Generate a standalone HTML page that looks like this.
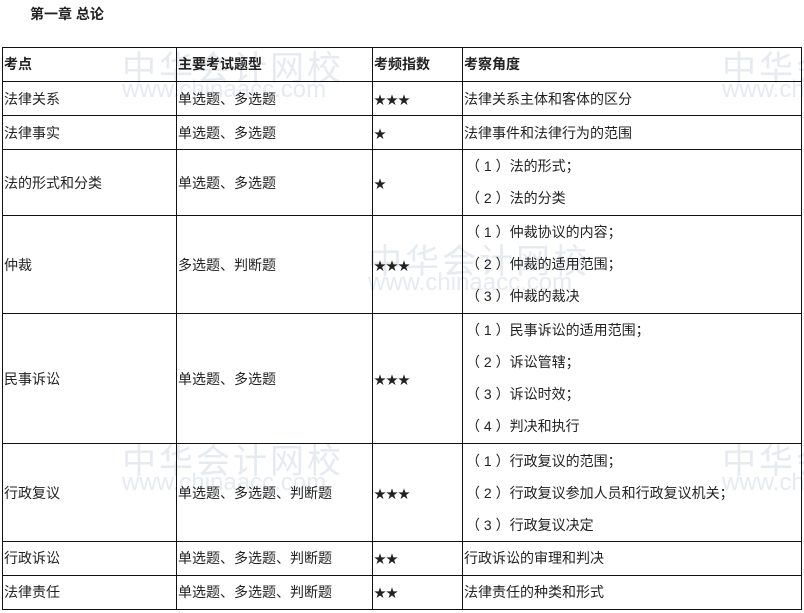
<!DOCTYPE html>
<html><head><meta charset="utf-8"><style>
body{margin:0;width:804px;height:613px;background:#fff;position:relative;overflow:hidden;font-family:"Liberation Sans","Noto Sans CJK SC",sans-serif;font-size:14px;color:#222}
.h{position:absolute;height:1px;background:#111;left:2px;width:800px}
.v{position:absolute;width:1px;background:#111;top:47px;height:563px}
.t{position:absolute;white-space:nowrap;line-height:16px}
.s{font-size:12px}
.wm{position:absolute;color:#e6eaf1;font-size:34px;letter-spacing:3px;white-space:nowrap}
.wm2{position:absolute;color:#e6eaf1;font-size:24px;white-space:nowrap}
</style></head><body>
<div class="wm" style="left:122px;top:41px">中华会计网校</div><div class="wm2" style="left:122px;top:76px">www.chinaacc.com</div>
<div class="wm" style="left:722px;top:41px">中华会</div><div class="wm2" style="left:722px;top:76px">www.ch</div>
<div class="wm" style="left:368px;top:234px">中华会计网校</div><div class="wm2" style="left:368px;top:269px">www.chinaacc.com</div>
<div class="wm" style="left:122px;top:434px">中华会计网校</div><div class="wm2" style="left:122px;top:469px">www.chinaacc.com</div>
<div class="wm" style="left:722px;top:434px">中华会</div><div class="wm2" style="left:722px;top:469px">www.ch</div>
<div class="t" style="left:30px;top:6px;font-weight:bold">第一章 总论</div>
<div class="h" style="top:47px"></div><div class="h" style="top:81px"></div><div class="h" style="top:115px"></div><div class="h" style="top:149px"></div><div class="h" style="top:215px"></div><div class="h" style="top:313px"></div><div class="h" style="top:443px"></div><div class="h" style="top:541px"></div><div class="h" style="top:575px"></div><div class="h" style="top:609px"></div>
<div class="v" style="left:2px"></div><div class="v" style="left:176px"></div><div class="v" style="left:372px"></div><div class="v" style="left:462px"></div><div class="v" style="left:801px"></div>
<div class="t" style="left:4px;top:56px;font-weight:bold">考点</div>
<div class="t" style="left:178px;top:56px;font-weight:bold">主要考试题型</div>
<div class="t" style="left:374px;top:56px;font-weight:bold">考频指数</div>
<div class="t" style="left:464px;top:56px;font-weight:bold">考察角度</div>
<div class="t" style="left:4px;top:91px">法律关系</div><div class="t" style="left:178px;top:91px">单选题、多选题</div><div class="t s" style="left:374px;top:92px">★★★</div><div class="t" style="left:464px;top:91px">法律关系主体和客体的区分</div>
<div class="t" style="left:4px;top:125px">法律事实</div><div class="t" style="left:178px;top:125px">单选题、多选题</div><div class="t s" style="left:374px;top:126px">★</div><div class="t" style="left:464px;top:125px">法律事件和法律行为的范围</div>
<div class="t" style="left:4px;top:175px">法的形式和分类</div><div class="t" style="left:178px;top:175px">单选题、多选题</div><div class="t s" style="left:374px;top:176px">★</div>
<div class="t" style="left:466px;top:158px">（ 1 ）法的形式；</div><div class="t" style="left:466px;top:190px">（ 2 ）法的分类</div>
<div class="t" style="left:4px;top:257px">仲裁</div><div class="t" style="left:178px;top:257px">多选题、判断题</div><div class="t s" style="left:374px;top:258px">★★★</div>
<div class="t" style="left:466px;top:224px">（ 1 ）仲裁协议的内容；</div><div class="t" style="left:466px;top:256px">（ 2 ）仲裁的适用范围；</div><div class="t" style="left:466px;top:288px">（ 3 ）仲裁的裁决</div>
<div class="t" style="left:4px;top:371px">民事诉讼</div><div class="t" style="left:178px;top:371px">单选题、多选题</div><div class="t s" style="left:374px;top:372px">★★★</div>
<div class="t" style="left:466px;top:322px">（ 1 ）民事诉讼的适用范围；</div><div class="t" style="left:466px;top:354px">（ 2 ）诉讼管辖；</div><div class="t" style="left:466px;top:386px">（ 3 ）诉讼时效；</div><div class="t" style="left:466px;top:418px">（ 4 ）判决和执行</div>
<div class="t" style="left:4px;top:485px">行政复议</div><div class="t" style="left:178px;top:485px">单选题、多选题、判断题</div><div class="t s" style="left:374px;top:486px">★★★</div>
<div class="t" style="left:466px;top:453px">（ 1 ）行政复议的范围；</div><div class="t" style="left:466px;top:485px">（ 2 ）行政复议参加人员和行政复议机关；</div><div class="t" style="left:466px;top:517px">（ 3 ）行政复议决定</div>
<div class="t" style="left:4px;top:550px">行政诉讼</div><div class="t" style="left:178px;top:550px">单选题、多选题、判断题</div><div class="t s" style="left:374px;top:551px">★★</div><div class="t" style="left:464px;top:550px">行政诉讼的审理和判决</div>
<div class="t" style="left:4px;top:584px">法律责任</div><div class="t" style="left:178px;top:584px">单选题、多选题、判断题</div><div class="t s" style="left:374px;top:585px">★★</div><div class="t" style="left:464px;top:584px">法律责任的种类和形式</div>
</body></html>
